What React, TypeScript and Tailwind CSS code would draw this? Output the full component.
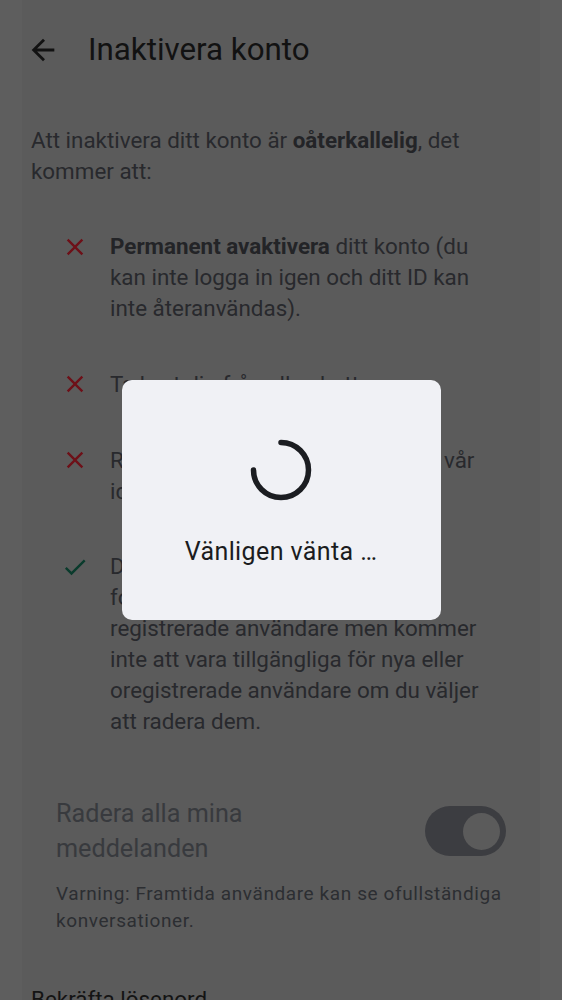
import { MdArrowBack, MdClose, MdCheck } from "react-icons/md";

const font = { fontFamily: "Roboto, 'Noto Sans', sans-serif" };

type Item = { ok: boolean; text: React.ReactNode };

const items: Item[] = [
  {
    ok: false,
    text: (
      <>
        <b className="font-bold text-[#232427]">Permanent avaktivera</b> ditt konto (du kan inte
        logga in igen och ditt ID kan inte återanvändas).
      </>
    ),
  },
  { ok: false, text: "Ta bort dig från alla chattar." },
  { ok: false, text: "Radera din kontoinformation från vår identitetsserver." },
  {
    ok: true,
    text: "Dina meddelanden kommer att fortfarande vara synliga för registrerade användare men kommer inte att vara tillgängliga för nya eller oregistrerade användare om du väljer att radera dem.",
  },
];

function Spinner() {
  return (
    <svg width="62" height="62" viewBox="0 0 62 62" fill="none">
      <path
        d="M31 3.5 A27.5 27.5 0 1 1 3.5 31"
        stroke="#1b1d21"
        strokeWidth="5.5"
        strokeLinecap="round"
      />
    </svg>
  );
}

export default function App() {
  return (
    <div className="min-h-screen bg-[#5e5e5e]" style={font}>
      <div className="mx-[22px] bg-[#5b5b5b] min-h-screen pb-10">
        {/* Top bar */}
        <div className="flex items-center h-[100px] pl-[4px]">
          <MdArrowBack size={34} className="text-[#121212]" />
          <h1 className="ml-[28px] text-[31.3px] leading-none text-[#121212]">Inaktivera konto</h1>
        </div>

        <div className="flex flex-col gap-[44.7px] mt-[24.5px]">
          <p className="px-[9px] text-[22.4px] leading-[31px] text-[#28292d]">
            Att inaktivera ditt konto är <b className="font-bold text-[#232427]">oåterkallelig</b>, det
            kommer att:
          </p>

          {items.map((it, i) => (
            <div key={i} className="flex pl-[39px] pr-[40px]">
              <div className="w-[49px] h-[31px] shrink-0 flex items-center">
                {it.ok ? (
                  <MdCheck size={28} className="text-[#0a3b2c]" />
                ) : (
                  <MdClose size={28} className="text-[#6e1018]" />
                )}
              </div>
              <p className="text-[22.4px] leading-[31px] text-[#28292d]">{it.text}</p>
            </div>
          ))}
        </div>

        {/* Delete messages toggle */}
        <div className="mt-[59px] px-[34px]">
          <div className="flex items-center justify-between">
            <span className="text-[25.2px] leading-[35px] text-[#383a3e]">
              Radera alla mina
              <br />
              meddelanden
            </span>
            <div className="w-[81px] h-[50px] rounded-full bg-[#3c3d41] flex items-center justify-end pr-[6px]">
              <div className="w-[37px] h-[37px] rounded-full bg-[#5b5b5b]" />
            </div>
          </div>
          <p className="mt-[14px] text-[19px] leading-[27px] tracking-[0.6px] text-[#2c2e32]">
            Varning: Framtida användare kan se ofullständiga konversationer.
          </p>
        </div>

        <p className="mt-[50px] px-[9px] text-[22.4px] leading-[31px] text-[#141414]">Bekräfta lösenord</p>
      </div>

      {/* Progress dialog */}
      <div className="fixed inset-0 flex items-center justify-center">
        <div className="w-[319px] h-[240px] rounded-[10px] bg-[#f0f1f5] flex flex-col items-center pt-[59px] gap-[36px]">
          <Spinner />
          <span className="text-[25px] leading-[30px] tracking-[0.4px] text-[#1b1c20]">Vänligen vänta …</span>
        </div>
      </div>
    </div>
  );
}
